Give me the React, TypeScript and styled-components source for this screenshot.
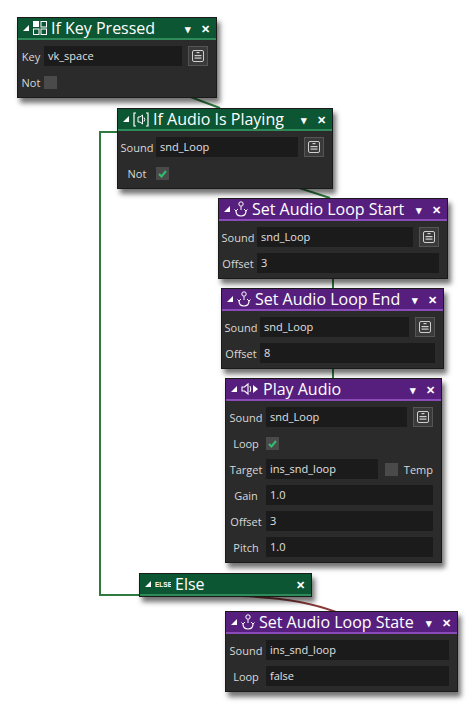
import React from 'react';
import styled, { createGlobalStyle } from 'styled-components';

const GlobalStyle = createGlobalStyle`
  html, body { margin: 0; padding: 0; background: #ffffff; }
  body { font-family: 'Open Sans', 'Noto Sans', sans-serif; }
`;

type Kind = 'green' | 'purple';

type Row =
  | { type: 'field'; label: string; value: string; button?: boolean; width?: number; temp?: boolean }
  | { type: 'check'; label: string; checked: boolean };

interface NodeProps {
  x: number;
  y: number;
  width: number;
  kind: Kind;
  icon: React.ReactNode;
  title: string;
  labelWidth?: number;
  dropdown?: boolean;
  rows?: Row[];
}

const Canvas = styled.div`
  position: relative;
  width: 474px;
  height: 707px;
  overflow: hidden;
  background: #ffffff;
`;

const Wires = styled.svg`
  position: absolute;
  left: 0;
  top: 0;
`;

const Box = styled.div<{ $x: number; $y: number; $w: number }>`
  position: absolute;
  left: ${(p) => p.$x}px;
  top: ${(p) => p.$y}px;
  width: ${(p) => p.$w}px;
  background: #2b2b2b;
  border: 1px solid #1a1a1a;
  box-shadow: 3px 5px 5px rgba(0, 0, 0, 0.55);
`;

const Header = styled.div<{ $kind: Kind }>`
  height: 20px;
  display: flex;
  align-items: center;
  gap: 4px;
  padding: 0 6px 0 5px;
  background: ${(p) => (p.$kind === 'green' ? '#0c5634' : '#561f7e')};
  border-bottom: 2px solid ${(p) => (p.$kind === 'green' ? '#2f8a5a' : '#8a4bb8')};
  color: #ffffff;
`;

const Title = styled.span`
  flex: 1;
  font-size: 16px;
  line-height: 20px;
  white-space: nowrap;
`;

const HeadBtn = styled.span`
  font-size: 11px;
  color: #ffffff;
  margin-left: 6px;
  font-weight: bold;
`;

const Body = styled.div`
  padding: 3px 0 2px 0;
`;

const RowLine = styled.div`
  height: 26px;
  display: flex;
  align-items: center;
  padding-right: 8px;
`;

const Label = styled.span<{ $w: number }>`
  width: ${(p) => p.$w}px;
  flex-shrink: 0;
  text-align: center;
  font-size: 11px;
  color: #d8d8d8;
`;

const Input = styled.div<{ $w?: number }>`
  ${(p) => (p.$w ? `width: ${p.$w}px;` : 'flex: 1;')}
  height: 20px;
  background: #1b1b1b;
  color: #e0e0e0;
  font-size: 11px;
  line-height: 20px;
  padding-left: 4px;
  box-sizing: border-box;
`;

const PickBtn = styled.div`
  width: 18px;
  height: 18px;
  margin-left: 6px;
  border: 1px solid #555;
  background: #3a3a3a;
  display: flex;
  align-items: center;
  justify-content: center;
`;

const Check = styled.div`
  width: 13px;
  height: 13px;
  background: #4a4a4a;
  display: flex;
  align-items: center;
  justify-content: center;
`;

const TempLabel = styled.span`
  margin-left: 6px;
  font-size: 11px;
  color: #d8d8d8;
`;

const Collapse = () => (
  <svg width="6" height="6" viewBox="0 0 6 6">
    <polygon points="6,0 6,6 0,6" fill="#fff" />
  </svg>
);

const Tick = () => (
  <svg width="11" height="11" viewBox="0 0 11 11">
    <path d="M2 6 L4.5 8.5 L9 3" stroke="#2fbf6f" strokeWidth="2" fill="none" />
  </svg>
);

const PickIcon = () => (
  <svg width="12" height="12" viewBox="0 0 12 12">
    <rect x="0.5" y="0.5" width="11" height="11" rx="1.5" fill="none" stroke="#cfcfcf" />
    <rect x="2.5" y="5" width="7" height="1.2" fill="#cfcfcf" />
    <rect x="2.5" y="7.5" width="7" height="1.2" fill="#cfcfcf" />
    <rect x="4.5" y="2" width="3" height="1.2" fill="#cfcfcf" />
  </svg>
);

const KeyIcon = () => (
  <svg width="14" height="14" viewBox="0 0 14 14">
    <rect x="0" y="0" width="6" height="6" fill="#fff" />
    <rect x="8" y="0.5" width="5.5" height="5.5" fill="none" stroke="#fff" />
    <rect x="0.5" y="8" width="5.5" height="5.5" fill="none" stroke="#fff" />
    <rect x="8" y="8" width="5.5" height="5.5" fill="none" stroke="#fff" />
  </svg>
);

const AudioPlayingIcon = () => (
  <svg width="16" height="15" viewBox="0 0 16 15">
    <path d="M3 1 H1 V14 H3 M13 1 H15 V14 H13" stroke="#fff" fill="none" strokeWidth="1.2" />
    <path d="M5 5 H7 L9.5 3 V12 L7 10 H5 Z" stroke="#fff" fill="none" strokeWidth="1" />
    <path d="M11 5.5 Q12.5 7.5 11 9.5" stroke="#fff" fill="none" />
  </svg>
);

const LoopIcon = () => (
  <svg width="14" height="16" viewBox="0 0 14 16">
    <circle cx="7" cy="3" r="2.2" stroke="#fff" fill="none" />
    <path d="M7 5.5 V9" stroke="#fff" />
    <path d="M2 10 Q2 15 7 15 Q12 15 12 10" stroke="#fff" fill="none" strokeWidth="1.2" />
    <path d="M4 8 L2 10 L0.5 8.5 M10 8 L12 10 L13.5 8.5" stroke="#fff" fill="none" />
  </svg>
);

const PlayIcon = () => (
  <svg width="18" height="14" viewBox="0 0 18 14">
    <path d="M1 5 H3.5 L7 2 V12 L3.5 9 H1 Z" stroke="#fff" fill="none" strokeWidth="1.1" />
    <path d="M9 4 Q10.5 7 9 10" stroke="#fff" fill="none" />
    <polygon points="12,3 17,7 12,11" fill="#fff" />
  </svg>
);

const ElseIcon = () => (
  <svg width="16" height="8" viewBox="0 0 16 8">
    <text x="0" y="7" fontSize="6.5" fill="#fff" fontFamily="Liberation Sans, sans-serif" fontWeight="bold">ELSE</text>
  </svg>
);

const Node = ({ x, y, width, kind, icon, title, labelWidth = 34, dropdown = true, rows = [] }: NodeProps) => (
  <Box $x={x} $y={y} $w={width}>
    <Header $kind={kind}>
      <Collapse />
      {icon}
      <Title>{title}</Title>
      {dropdown && <HeadBtn>▾</HeadBtn>}
      <HeadBtn>✕</HeadBtn>
    </Header>
    {rows.length > 0 && (
      <Body>
        {rows.map((r, i) => (
          <RowLine key={i}>
            <Label $w={labelWidth}>{r.label}</Label>
            {r.type === 'field' ? (
              <>
                <Input $w={r.width}>{r.value}</Input>
                {r.button && (
                  <PickBtn>
                    <PickIcon />
                  </PickBtn>
                )}
                {r.temp && (
                  <>
                    <Check style={{ marginLeft: 7 }} />
                    <TempLabel>Temp</TempLabel>
                  </>
                )}
              </>
            ) : (
              <Check>{r.checked && <Tick />}</Check>
            )}
          </RowLine>
        ))}
      </Body>
    )}
  </Box>
);

export default function App() {
  return (
    <>
      <GlobalStyle />
      <Canvas>
        <Wires width="474" height="707">
          <path d="M185 95 L220 108" stroke="#2f7a3e" strokeWidth="2" fill="none" />
          <path d="M290 185 L330 198" stroke="#2f7a3e" strokeWidth="2" fill="none" />
          <path d="M333 276 L333 289" stroke="#2f7a3e" strokeWidth="2" fill="none" />
          <path d="M333 365 L333 379" stroke="#2f7a3e" strokeWidth="2" fill="none" />
          <path d="M119 132 L100 132 L100 595 L140 595" stroke="#2f7a3e" strokeWidth="2" fill="none" />
          <path d="M240 596 Q300 598 336 612" stroke="#8a3a3a" strokeWidth="2" fill="none" />
        </Wires>
        <Node
          x={17} y={17} width={198} kind="green" icon={<KeyIcon />} title="If Key Pressed" labelWidth={26}
          rows={[
            { type: 'field', label: 'Key', value: 'vk_space', button: true },
            { type: 'check', label: 'Not', checked: false },
          ]}
        />
        <Node
          x={117} y={108} width={214} kind="green" icon={<AudioPlayingIcon />} title="If Audio Is Playing" labelWidth={38}
          rows={[
            { type: 'field', label: 'Sound', value: 'snd_Loop', button: true },
            { type: 'check', label: 'Not', checked: true },
          ]}
        />
        <Node
          x={218} y={198} width={228} kind="purple" icon={<LoopIcon />} title="Set Audio Loop Start" labelWidth={38}
          rows={[
            { type: 'field', label: 'Sound', value: 'snd_Loop', button: true },
            { type: 'field', label: 'Offset', value: '3' },
          ]}
        />
        <Node
          x={221} y={288} width={221} kind="purple" icon={<LoopIcon />} title="Set Audio Loop End" labelWidth={38}
          rows={[
            { type: 'field', label: 'Sound', value: 'snd_Loop', button: true },
            { type: 'field', label: 'Offset', value: '8' },
          ]}
        />
        <Node
          x={225} y={378} width={215} kind="purple" icon={<PlayIcon />} title="Play Audio" labelWidth={40}
          rows={[
            { type: 'field', label: 'Sound', value: 'snd_Loop', button: true },
            { type: 'check', label: 'Loop', checked: true },
            { type: 'field', label: 'Target', value: 'ins_snd_loop', width: 114, temp: true },
            { type: 'field', label: 'Gain', value: '1.0' },
            { type: 'field', label: 'Offset', value: '3' },
            { type: 'field', label: 'Pitch', value: '1.0' },
          ]}
        />
        <Node x={139} y={573} width={171} kind="green" icon={<ElseIcon />} title="Else" dropdown={false} />
        <Node
          x={225} y={611} width={231} kind="purple" icon={<LoopIcon />} title="Set Audio Loop State" labelWidth={40}
          rows={[
            { type: 'field', label: 'Sound', value: 'ins_snd_loop' },
            { type: 'field', label: 'Loop', value: 'false' },
          ]}
        />
      </Canvas>
    </>
  );
}
